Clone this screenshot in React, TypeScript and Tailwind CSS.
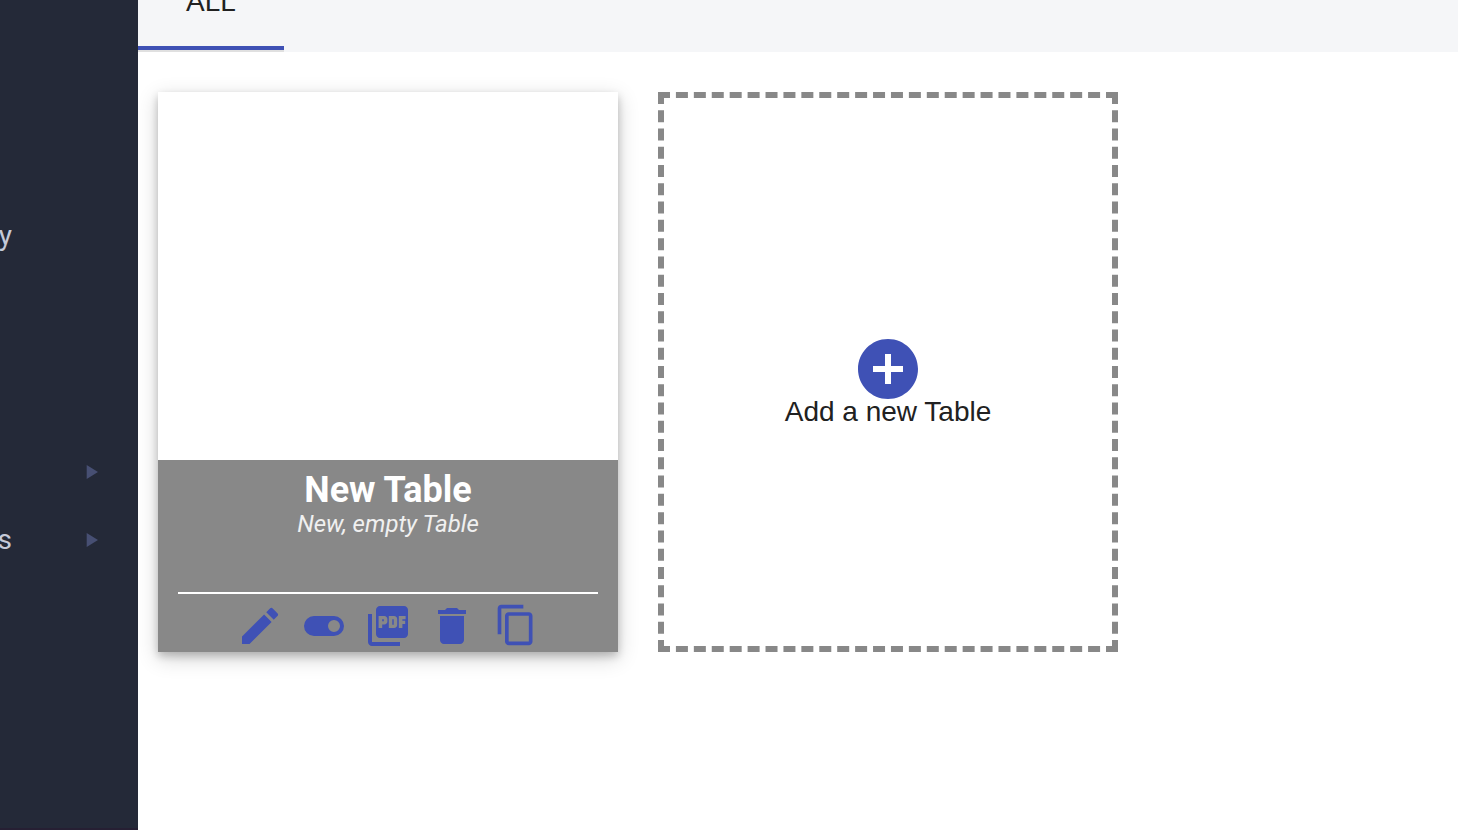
import type { ReactNode } from "react";
import { MdAddCircle, MdContentCopy, MdDelete, MdEdit } from "react-icons/md";

type NavItemProps = {
  label: string;
  expandable?: boolean;
};

const NavItem = ({ label, expandable }: NavItemProps) => {
  return (
    <a
      href="#"
      className="flex h-[68px] items-center justify-between pr-10 text-[28px] text-[#c5cad9]"
    >
      <span className="flex w-3 justify-end">{label}</span>
      {expandable && (
        <svg viewBox="0 0 12 14" className="h-[14px] w-3 fill-[#474f73]">
          <path d="M0.7 0L12 7L0.7 14Z" />
        </svg>
      )}
    </a>
  );
};

const Sidebar = () => {
  return (
    <nav className="flex w-[138px] shrink-0 flex-col border-b-2 border-[#261f33] bg-[#242938] pt-[202px] font-[Roboto,sans-serif]">
      <NavItem label="y" />
      <div className="mt-[168px]">
        <NavItem label="" expandable />
        <NavItem label="s" expandable />
      </div>
    </nav>
  );
};

const ToggleIcon = () => {
  return (
    <svg viewBox="0 0 24 24" className="size-12 fill-current">
      <path d="M17,7H7A5,5 0 0,0 2,12A5,5 0 0,0 7,17H17A5,5 0 0,0 22,12A5,5 0 0,0 17,7M17,15A3,3 0 0,1 14,12A3,3 0 0,1 17,9A3,3 0 0,1 20,12A3,3 0 0,1 17,15Z" />
    </svg>
  );
};

const PdfIcon = () => {
  return (
    <svg viewBox="0 0 24 24" className="size-12 fill-current">
      <path
        fillRule="evenodd"
        d="M20 2H8c-1.1 0-2 .9-2 2v12c0 1.100.9 2 2 2h12c1.100 0 2-.9 2-2V4c0-1.100-.9-2-2-2zM7.300 7H10.200c.8 0 1.500.7 1.500 1.500v1.200c0 .8-.7 1.500-1.500 1.500H9.100V13H7.300zM9.100 8.600v1h.8v-1zM12.400 7H15.100c.8 0 1.500.7 1.500 1.500v3c0 .8-.7 1.500-1.500 1.500H12.400zM14.150 8.600v2.800h.7V8.600zM17.400 7H20.800V8.600H19.200V9.400H20.600V11H19.200V13H17.400z"
      />
      <path d="M4 6H2v14c0 1.100.9 2 2 2h14v-2H4z" />
    </svg>
  );
};

type IconButtonProps = {
  label: string;
  children: ReactNode;
};

const IconButton = ({ label, children }: IconButtonProps) => {
  return (
    <button
      type="button"
      aria-label={label}
      className="flex size-12 cursor-pointer justify-center text-[#3f51b5]"
    >
      {children}
    </button>
  );
};

type TableCardProps = {
  title: string;
  description: string;
};

const TableCard = ({ title, description }: TableCardProps) => {
  return (
    <article className="flex h-[560px] w-[460px] flex-col justify-end bg-white shadow-[0_4px_8px_0_rgba(0,0,0,0.2),0_6px_20px_0_rgba(0,0,0,0.19)]">
      <div className="flex h-48 flex-col bg-[#888888] px-5 pt-2 text-center font-[Roboto,sans-serif] text-white">
        <h2 className="text-4xl leading-11 font-bold">{title}</h2>
        <p className="text-2xl leading-6 text-[#f0f0f0] italic">
          {description}
        </p>
        <div className="mt-auto flex justify-center gap-4 border-t-2 border-white pt-2 pb-[2px]">
          <IconButton label="Edit">
            <MdEdit className="size-12" />
          </IconButton>
          <IconButton label="Toggle">
            <ToggleIcon />
          </IconButton>
          <IconButton label="Export as PDF">
            <PdfIcon />
          </IconButton>
          <IconButton label="Delete">
            <MdDelete className="size-12" />
          </IconButton>
          <IconButton label="Copy">
            <MdContentCopy className="mt-px size-11" />
          </IconButton>
        </div>
      </div>
    </article>
  );
};

const AddTableCard = () => {
  return (
    <button
      type="button"
      className="flex h-[560px] w-[460px] cursor-pointer flex-col items-center justify-center border-6 border-dashed border-[#888888] pt-5 text-[28px] leading-[26px] text-[#212121]"
    >
      <MdAddCircle viewBox="2 2 20 20" className="size-15 text-[#3f51b5]" />
      Add a new Table
    </button>
  );
};

const App = () => {
  return (
    <div className="flex min-h-screen overflow-hidden bg-white font-['Liberation_Sans',Arial,sans-serif]">
      <Sidebar />
      <main className="flex-1">
        <header className="flex h-13 items-end bg-[#f5f6f8]">
          <div role="tablist" className="border-b-2 border-[#e0e0e0]">
            <button
              type="button"
              role="tab"
              aria-selected="true"
              className="block cursor-pointer border-b-4 border-[#3f51b5] px-12 pb-[30px] text-[28px] leading-7 text-[#212121]"
            >
              ALL
            </button>
          </div>
        </header>
        <section className="flex flex-wrap gap-10 px-5 py-10">
          <TableCard title="New Table" description="New, empty Table" />
          <AddTableCard />
        </section>
      </main>
    </div>
  );
};

export default App;
